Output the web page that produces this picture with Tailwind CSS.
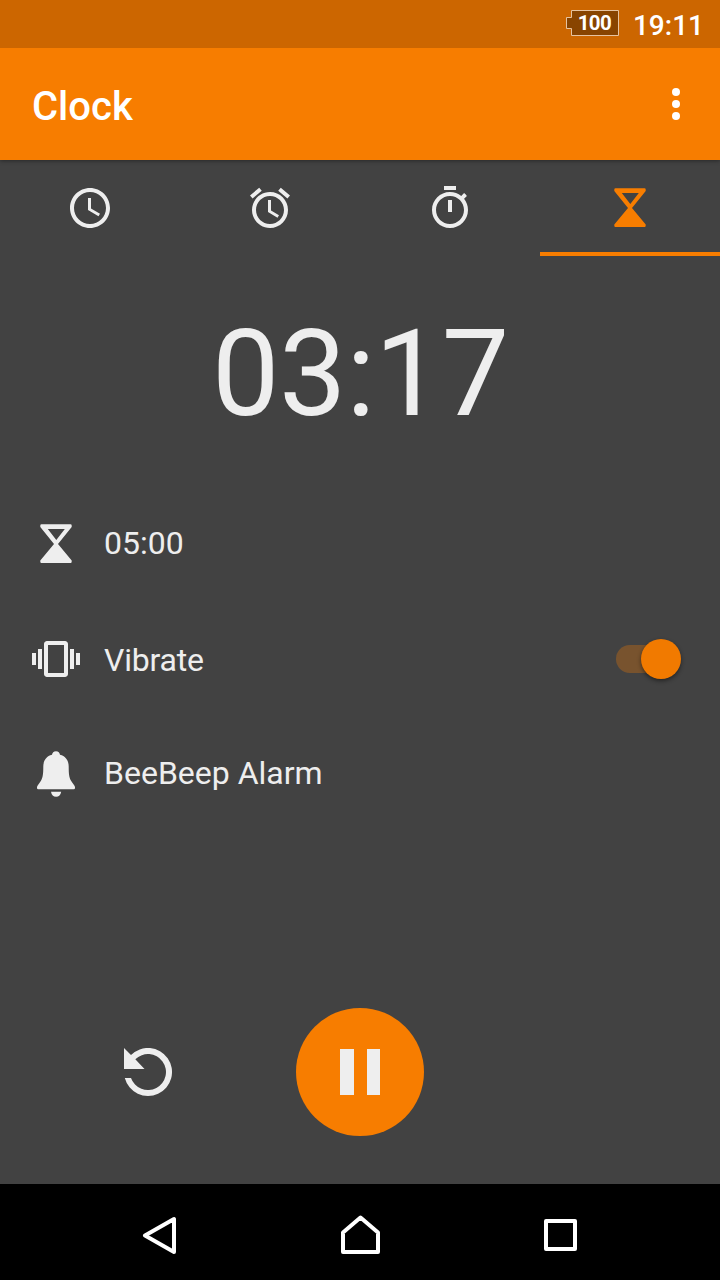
<!DOCTYPE html>
<html lang="en">
<head>
<meta charset="utf-8">
<title>Clock</title>
<script src="https://cdn.jsdelivr.net/npm/@tailwindcss/browser@4"></script>
</head>
<body class="bg-[#424242]">
<svg class="hidden">
  <symbol id="hourglass" viewBox="0 0 48 48"><path fill-rule="evenodd" d="M9.500 4.300h29q1.200 0 1.200 1.200v1.500L26 24l13.700 16.500v1.300q0 1.200-1.200 1.200h-29q-1.200 0-1.200-1.200v-1.300L22 24 8.300 7V5.500q0-1.200 1.200-1.200zM15.800 8.900L24.300 20 32.800 8.900z"/></symbol>
</svg>
<div class="flex flex-col w-[720px] h-[1280px] overflow-hidden bg-[#424242] text-[#eeeeee] font-['Roboto',sans-serif]">
  <!-- Status bar -->
  <div class="relative z-10 flex items-center justify-end h-12 shrink-0 bg-[#cc6600] text-white pr-4">
    <div class="relative flex items-center justify-center w-[53px] h-[26px] mr-[14px] mb-[2px]">
      <svg class="absolute inset-0 w-[53px] h-[26px]" viewBox="0 0 53 26"><path d="M5.5.5h47v25h-47v-7h-5v-11h5z" fill="#884400" stroke="#e6c3a0"/></svg>
      <span class="relative text-[20.500px] leading-none font-bold pl-1 pt-[1px] tracking-[-0.6px]">100</span>
    </div>
    <span class="text-[28px] leading-none font-medium pt-[3px]">19:11</span>
  </div>
  <!-- App bar -->
  <header class="relative flex items-center justify-between h-28 shrink-0 bg-[#f77d00] pl-8 pr-10 text-white shadow-[0_1px_4px_rgba(0,0,0,0.4)]">
    <h1 class="text-[40px] leading-none font-medium pt-[5px]">Clock</h1>
    <svg class="w-2 h-8" viewBox="0 0 8 32" fill="currentColor"><circle cx="4" cy="4" r="4"/><circle cx="4" cy="16" r="4"/><circle cx="4" cy="28" r="4"/></svg>
  </header>
  <!-- Tabs -->
  <nav class="grid grid-cols-4 h-24 shrink-0">
    <div class="flex justify-center pt-6"><svg class="w-12 h-12" viewBox="0 0 24 24" fill="currentColor"><path d="M11.99 2C6.47 2 2 6.48 2 12s4.47 10 9.99 10C17.52 22 22 17.52 22 12S17.52 2 11.99 2zM12 20c-4.42 0-8-3.58-8-8s3.58-8 8-8 8 3.58 8 8-3.58 8-8 8zm.5-13H11v6l5.25 3.15.75-1.23-4.5-2.67z"/></svg></div>
    <div class="flex justify-center pt-6"><svg class="w-12 h-12" viewBox="0 0 24 24" fill="currentColor"><path d="M22 5.72l-4.6-3.86-1.29 1.53 4.6 3.86L22 5.72zM7.88 3.39L6.6 1.86 2 5.71l1.29 1.53 4.59-3.85zM12.5 8H11v6l4.75 2.85.75-1.23-4-2.37V8zM12 4c-4.97 0-9 4.03-9 9s4.02 9 9 9c4.97 0 9-4.03 9-9s-4.03-9-9-9zm0 16c-3.87 0-7-3.13-7-7s3.13-7 7-7 7 3.13 7 7-3.13 7-7 7z"/></svg></div>
    <div class="flex justify-center pt-6"><svg class="w-12 h-12" viewBox="0 0 24 24" fill="currentColor"><path d="M15 1H9v2h6V1zm-4 13h2V8h-2v6zm8.03-6.61l1.42-1.42c-.43-.51-.9-.99-1.41-1.41l-1.42 1.42C16.07 4.74 14.12 4 12 4c-4.97 0-9 4.03-9 9s4.02 9 9 9 9-4.03 9-9c0-2.12-.74-4.07-1.97-5.61zM12 20c-3.87 0-7-3.13-7-7s3.13-7 7-7 7 3.13 7 7-3.13 7-7 7z"/></svg></div>
    <div class="flex justify-center pt-6 border-b-4 border-[#f77d00] text-[#f77d00]"><svg class="w-12 h-12" fill="currentColor"><use href="#hourglass"/></svg></div>
  </nav>
  <!-- Countdown -->
  <div class="flex items-center justify-center h-[232px] shrink-0 pt-1 pl-[1px] text-[120px] leading-none tracking-[-0.4px]">03:17</div>
  <!-- Timer settings -->
  <div class="flex items-center h-28 shrink-0 px-8 gap-6 text-[32px] leading-none">
    <svg class="w-12 h-12" fill="currentColor"><use href="#hourglass"/></svg>
    <span class="pb-[2px]">05:00</span>
  </div>
  <div class="flex items-center h-[118px] shrink-0 px-8 gap-6 text-[32px] leading-none">
    <svg class="w-12 h-12" viewBox="0 0 24 24" fill="currentColor"><path d="M0 15h2V9H0v6zm3 2h2V7H3v10zm19-8v6h2V9h-2zm-3 8h2V7h-2v10zM16.5 3h-9C6.67 3 6 3.67 6 4.5v15c0 .83.67 1.5 1.5 1.5h9c.83 0 1.5-.67 1.5-1.5v-15c0-.83-.67-1.5-1.5-1.5zM16 19H8V5h8v14z"/></svg>
    <span class="grow pt-[2px] tracking-[-0.2px]">Vibrate</span>
    <div class="flex items-center justify-end w-[65px] h-7 mr-[7px] rounded-full bg-linear-to-r from-[#78532e] from-70% to-transparent to-70%">
      <div class="size-10 shrink-0 rounded-full bg-[#f17a00] shadow-[0_2px_4px_rgba(0,0,0,0.45)]"></div>
    </div>
  </div>
  <div class="flex items-center h-[110px] shrink-0 px-8 gap-6 text-[32px] leading-none">
    <svg class="w-12 h-12" viewBox="0 0 48 48" fill="currentColor"><path d="M24 2.200c-2.300 0-3.800 1.500-4 3.600C14 7.300 11.300 12 11.300 17.500c0 7-.3 11-2.500 14.500Q7.500 34 6 36q-1 1.300-1 2.300v.7q0 1.200 1.300 1.200h35.400q1.300 0 1.300-1.200v-.7q0-1-1-2.300-1.500-2-2.800-4c-2.200-3.500-2.500-7.500-2.500-14.500 0-5.500-2.700-10.200-8.700-11.700-.2-2.100-1.700-3.600-4-3.600zM19 42.700h10.200q-.9 5.100-5.100 5.100t-5.100-5.100z"/></svg>
    <span>BeeBeep Alarm</span>
  </div>
  <!-- Controls -->
  <div class="grid grid-cols-[296px_128px_296px] items-center mt-auto mb-12 h-32 shrink-0">
    <svg class="w-12 h-12 justify-self-center" viewBox="0 0 48 48" fill="currentColor"><path d="M0 0v21h20.500L11.300 11.300A18 18 0 1 1 7 30H.800A24 24 0 1 0 7 7z"/></svg>
    <div class="flex items-center justify-center gap-[13px] size-32 rounded-full bg-[#f77d00]">
      <div class="w-[13.500px] h-[46.500px] bg-[#eeeeee]"></div>
      <div class="w-[13.500px] h-[46.500px] bg-[#eeeeee]"></div>
    </div>
  </div>
  <!-- Navigation bar -->
  <div class="flex items-center h-24 shrink-0 bg-black pl-[142px]">
    <svg class="w-[436px] h-12" viewBox="142 1208 436 48" fill="none" stroke="white" stroke-width="4" stroke-linejoin="round"><path d="M174 1219v33l-29-16.500zM360.500 1217.500L343 1232.500V1252h35v-19.500zM546 1221h29v28h-29z"/></svg>
  </div>
</div>
</body>
</html>
